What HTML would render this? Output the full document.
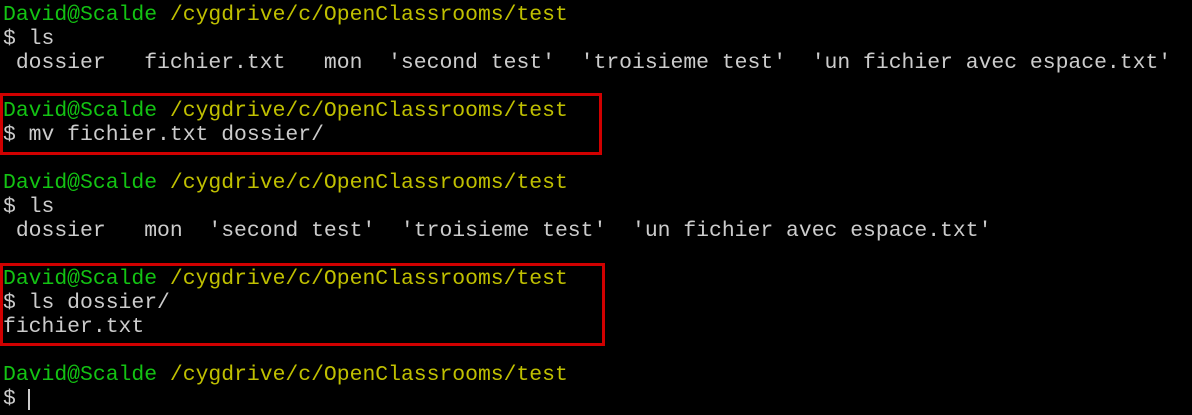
<!DOCTYPE html>
<html><head><style>
html,body{margin:0;padding:0;background:#000;width:1192px;height:415px;overflow:hidden}
.t{position:absolute;left:3px;top:3px;font-family:"Liberation Mono",monospace;font-size:21.4px;line-height:24px;color:#cccccc;white-space:pre}
.g{color:#13c313}.y{color:#c0c000}
.box{position:absolute;border:3px solid #d00000;box-sizing:border-box}
.cur{position:absolute;left:28px;top:389px;width:2px;height:21px;background:#ccc}
</style></head><body>
<div class="t"><span class="g">David@Scalde</span> <span class="y">/cygdrive/c/OpenClassrooms/test</span>
$ ls
 dossier   fichier.txt   mon  'second test'  'troisieme test'  'un fichier avec espace.txt'

<span class="g">David@Scalde</span> <span class="y">/cygdrive/c/OpenClassrooms/test</span>
$ mv fichier.txt dossier/

<span class="g">David@Scalde</span> <span class="y">/cygdrive/c/OpenClassrooms/test</span>
$ ls
 dossier   mon  'second test'  'troisieme test'  'un fichier avec espace.txt'

<span class="g">David@Scalde</span> <span class="y">/cygdrive/c/OpenClassrooms/test</span>
$ ls dossier/
fichier.txt

<span class="g">David@Scalde</span> <span class="y">/cygdrive/c/OpenClassrooms/test</span>
$ </div>
<div class="box" style="left:0;top:93px;width:602px;height:62px"></div>
<div class="box" style="left:0;top:263px;width:605px;height:83px"></div>
<div class="cur"></div>
</body></html>
